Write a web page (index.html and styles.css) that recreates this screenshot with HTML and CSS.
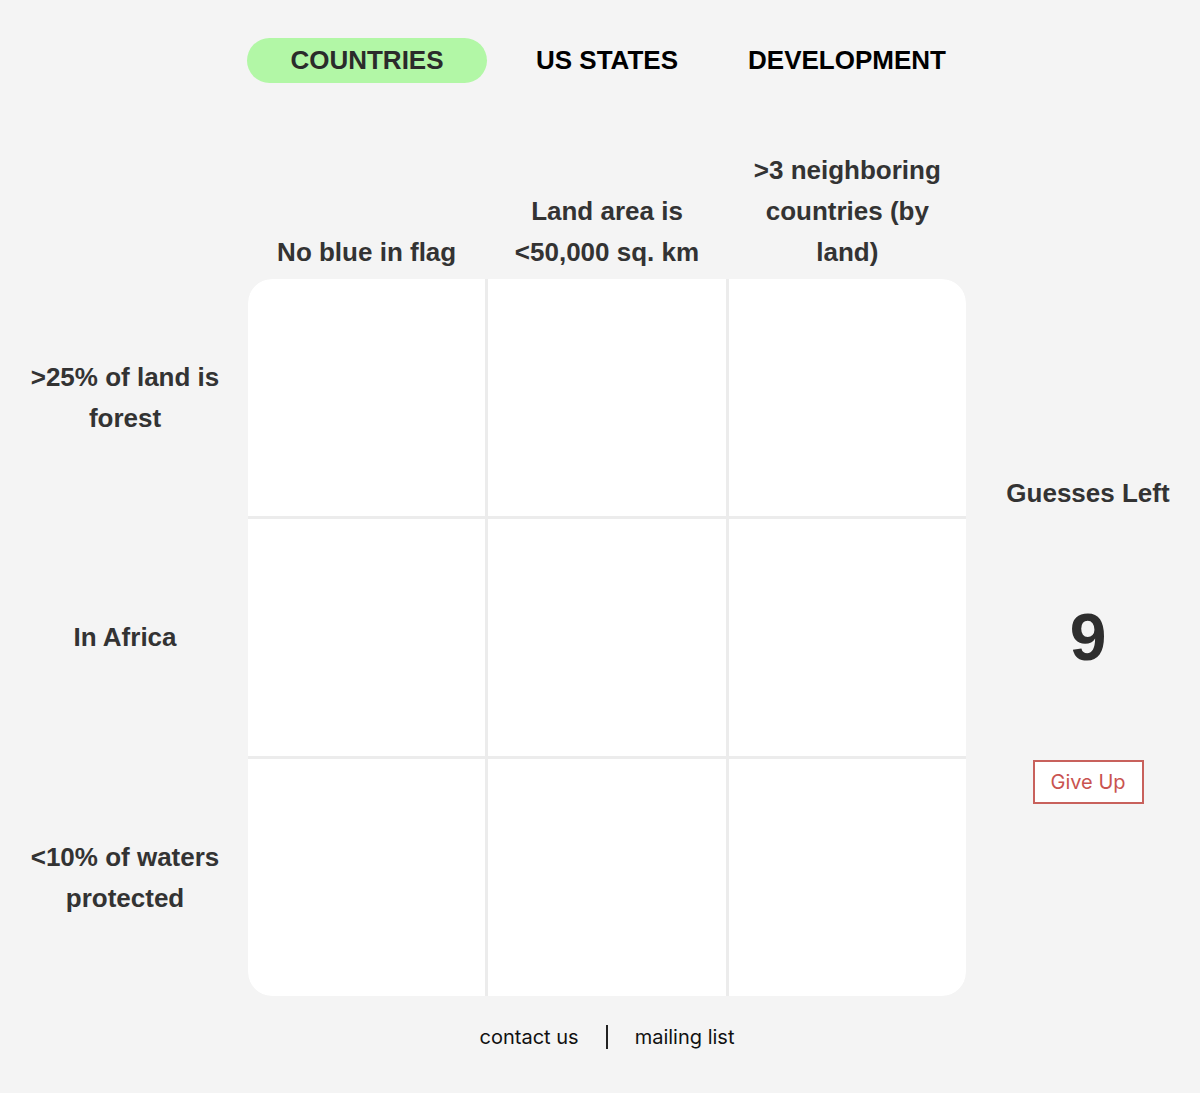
FILE: index.html
```html
<!DOCTYPE html>
<html>
<head>
<meta charset="utf-8">
<link rel="stylesheet" href="styles.css">
</head>
<body>
<nav class="tabs">
  <div class="tab active">COUNTRIES</div>
  <div class="tab">US STATES</div>
  <div class="tab">DEVELOPMENT</div>
</nav>
<main class="board">
  <div class="corner"></div>
  <div class="col-heads">
    <div class="col-head">No blue in flag</div>
    <div class="col-head">Land area is &lt;50,000 sq. km</div>
    <div class="col-head">&gt;3 neighboring countries (by land)</div>
  </div>
  <div class="spacer"></div>
  <div class="row-heads">
    <div class="row-head">&gt;25% of land is forest</div>
    <div class="row-head">In Africa</div>
    <div class="row-head">&lt;10% of waters protected</div>
  </div>
  <div class="grid">
    <div class="cell"></div><div class="cell"></div><div class="cell"></div>
    <div class="cell"></div><div class="cell"></div><div class="cell"></div>
    <div class="cell"></div><div class="cell"></div><div class="cell"></div>
  </div>
  <aside class="side">
    <div class="guess-label">Guesses Left</div>
    <div class="guess-count">9</div>
    <button class="give-up">Give Up</button>
  </aside>
  <div class="corner"></div>
  <footer class="footer">
    <a class="foot-link">contact us</a>
    <span class="divider"></span>
    <a class="foot-link">mailing list</a>
  </footer>
</main>
</body>
</html>
```

FILE: styles.css
```css
html, body {
  margin: 0;
  padding: 0;
  background: #f4f4f4;
}
body {
  font-family: "Liberation Sans", Arial, sans-serif;
  color: #333;
}
.tabs {
  display: flex;
  padding: 38px 0 0 247px;
}
.tab {
  width: 240px;
  height: 45px;
  line-height: 45px;
  text-align: center;
  font-size: 26px;
  font-weight: bold;
  color: #000;
  border-radius: 23px;
}
.tab.active {
  background: #b2f7a6;
  color: #2b2b2b;
}
.board {
  display: grid;
  grid-template-columns: 248px 718px 1fr;
  grid-template-rows: auto 717px auto;
  margin-top: 67px;
}
.col-heads {
  display: grid;
  grid-template-columns: repeat(3, 1fr);
  column-gap: 3px;
  padding-bottom: 6px;
}
.col-head {
  align-self: end;
  text-align: center;
  font-size: 26px;
  font-weight: bold;
  line-height: 41px;
  padding: 0 10px;
}
.row-heads {
  display: grid;
  grid-template-rows: repeat(3, 1fr);
  row-gap: 3px;
  padding-left: 2px;
}
.row-head {
  align-self: center;
  text-align: center;
  font-size: 26px;
  font-weight: bold;
  line-height: 41px;
  padding: 0 18px;
}
.grid {
  display: grid;
  grid-template-columns: repeat(3, 1fr);
  grid-template-rows: repeat(3, 1fr);
  gap: 3px;
  background: #ececec;
  border-radius: 24px;
  overflow: hidden;
}
.cell {
  background: #fff;
}
.side {
  margin-left: 10px;
  display: flex;
  flex-direction: column;
  align-items: center;
  justify-content: center;
  gap: 83px;
}
.guess-label {
  font-size: 26px;
  font-weight: bold;
  line-height: 41px;
  margin-top: 2px;
}
.guess-count {
  font-size: 66px;
  font-weight: bold;
  line-height: 80px;
  color: #2e2e2e;
}
.give-up {
  width: 111px;
  height: 44px;
  background: #fff;
  border: 2px solid #c8615c;
  color: #c9534f;
  font-family: Inter, "Liberation Sans", sans-serif;
  font-size: 20px;
  padding: 0;
}
.footer {
  display: flex;
  justify-content: center;
  align-items: center;
  gap: 27px;
  padding-top: 27px;
  font-family: Inter, "Liberation Sans", sans-serif;
  font-size: 20px;
  color: #111;
}
.foot-link {
  line-height: 28px;
}
.divider {
  width: 2px;
  height: 24px;
  background: #222;
}
```
